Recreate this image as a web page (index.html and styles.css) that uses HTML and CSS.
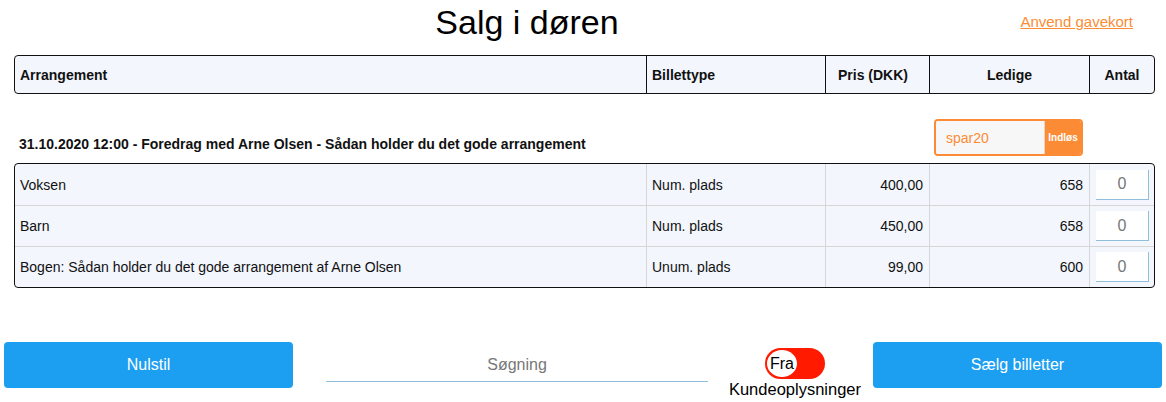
FILE: index.html
```html
<!DOCTYPE html>
<html lang="da">
<head>
<meta charset="utf-8">
<title>Salg i døren</title>
<link rel="stylesheet" href="styles.css">
</head>
<body>
<div class="page">
  <header class="top">
    <h1 class="title">Salg i døren</h1>
    <a class="giftcard" href="#">Anvend gavekort</a>
  </header>

  <div class="grid head">
    <div class="cell">Arrangement</div>
    <div class="cell">Billettype</div>
    <div class="cell center pris">Pris (DKK)</div>
    <div class="cell center">Ledige</div>
    <div class="cell center">Antal</div>
  </div>

  <div class="event-row">
    <div class="event-title">31.10.2020 12:00 - Foredrag med Arne Olsen - Sådan holder du det gode arrangement</div>
    <div class="coupon">
      <div class="coupon-input">spar20</div>
      <div class="coupon-btn">Indløs</div>
    </div>
  </div>

  <div class="grid body">
    <div class="cell">Voksen</div>
    <div class="cell">Num. plads</div>
    <div class="cell right">400,00</div>
    <div class="cell right">658</div>
    <div class="cell qty"><div class="qty-input">0</div></div>

    <div class="cell">Barn</div>
    <div class="cell">Num. plads</div>
    <div class="cell right">450,00</div>
    <div class="cell right">658</div>
    <div class="cell qty"><div class="qty-input">0</div></div>

    <div class="cell">Bogen: Sådan holder du det gode arrangement af Arne Olsen</div>
    <div class="cell">Unum. plads</div>
    <div class="cell right">99,00</div>
    <div class="cell right">600</div>
    <div class="cell qty"><div class="qty-input">0</div></div>
  </div>

  <div class="actions">
    <button class="btn">Nulstil</button>
    <div class="search">Søgning</div>
    <div class="toggle-group">
      <div class="toggle"><span class="knob">Fra</span></div>
      <div class="toggle-label">Kundeoplysninger</div>
    </div>
    <button class="btn sell">Sælg billetter</button>
  </div>
</div>
</body>
</html>
```

FILE: styles.css
```css
* { box-sizing: border-box; }
html, body { margin: 0; padding: 0; background: #fff; }
body {
  font-family: "Liberation Sans", Arial, sans-serif;
  color: #111;
  width: 1166px;
  height: 402px;
  overflow: hidden;
}
.page { padding: 0; }

.top {
  position: relative;
  height: 55px;
  display: flex;
  justify-content: center;
}
.title {
  margin: 0;
  font-weight: normal;
  font-size: 34px;
  line-height: 44px;
  color: #000;
  padding-right: 112px;
}
.giftcard {
  position: absolute;
  right: 33px;
  top: 13px;
  color: #fb8c35;
  font-size: 15px;
  text-decoration: underline;
}

.grid {
  display: grid;
  grid-template-columns: 631px 179px 104px 160px 1fr;
  margin: 0 11px 0 14px;
  border: 1px solid #111;
  border-radius: 4px;
  background: #f3f6fd;
  overflow: hidden;
}
.head { height: 39px; }
.head .cell {
  font-weight: bold;
  font-size: 14px;
  display: flex;
  align-items: center;
  padding: 0 5px;
  border-left: 1px solid #111;
}
.head .cell:first-child { border-left: none; }
.cell.center { justify-content: center; }
.head .pris { padding-right: 14px; }

.event-row {
  display: flex;
  justify-content: space-between;
  align-items: flex-end;
  margin: 25px 83px 0 19px;
  height: 44px;
}
.event-title {
  font-weight: bold;
  font-size: 14px;
  padding-bottom: 11px;
}
.coupon {
  display: flex;
  width: 149px;
  height: 37px;
  border: 2px solid #fb8c35;
  border-radius: 4px;
  overflow: hidden;
  margin-bottom: 7px;
}
.coupon-input {
  flex: 1;
  background: #f7f7f7;
  color: #fb8c35;
  font-size: 14px;
  padding: 9px 0 0 10px;
}
.coupon-btn {
  width: 37px;
  background: #fb8c35;
  color: #fff;
  font-weight: bold;
  font-size: 10px;
  display: flex;
  align-items: center;
  justify-content: center;
  border-left: 1px solid #f0d2b8;
}

.body { grid-auto-rows: 41px; }
.body .cell {
  font-size: 14px;
  display: flex;
  align-items: center;
  padding: 0 6px 0 5px;
  border-left: 1px solid #d6d6d6;
  border-top: 1px solid #d6d6d6;
}
.body .cell:nth-child(5n+1) { border-left: none; }
.body .cell:nth-child(-n+5) { border-top: none; }
.cell.right { justify-content: flex-end; }
.cell.qty { padding: 0 0 0 6px; }
.qty-input {
  width: 53px;
  height: 30px;
  background: #fff;
  border-right: 1px solid #8fbfdd;
  border-bottom: 1px solid #8fbfdd;
  color: #777;
  font-size: 16px;
  display: flex;
  align-items: center;
  justify-content: center;
}

.actions {
  display: flex;
  align-items: flex-start;
  margin: 54px 4px 0 4px;
}
.btn {
  width: 289px;
  height: 46px;
  border: none;
  border-radius: 4px;
  background: #1d9ff1;
  color: #fff;
  font-family: "Liberation Sans", Arial, sans-serif;
  font-size: 16px;
}
.search {
  width: 382px;
  height: 40px;
  margin-left: 33px;
  border-bottom: 1px solid #8fbfdd;
  color: #777;
  font-size: 16px;
  display: flex;
  align-items: center;
  justify-content: center;
  padding-top: 6px;
}
.toggle-group {
  width: 142px;
  margin-left: 16px;
  margin-top: 6px;
  display: flex;
  flex-direction: column;
  align-items: center;
}
.toggle {
  width: 60px;
  height: 31px;
  border-radius: 16px;
  background: #ff1a00;
  padding: 2px;
  display: flex;
}
.knob {
  width: 30px;
  height: 27px;
  border-radius: 50%;
  background: #fff;
  color: #000;
  font-size: 16px;
  display: flex;
  align-items: center;
  justify-content: center;
}
.toggle-label {
  font-size: 16.5px;
  color: #000;
  line-height: 18px;
  margin-top: 1px;
}
.sell { margin-left: 7px; }
```
